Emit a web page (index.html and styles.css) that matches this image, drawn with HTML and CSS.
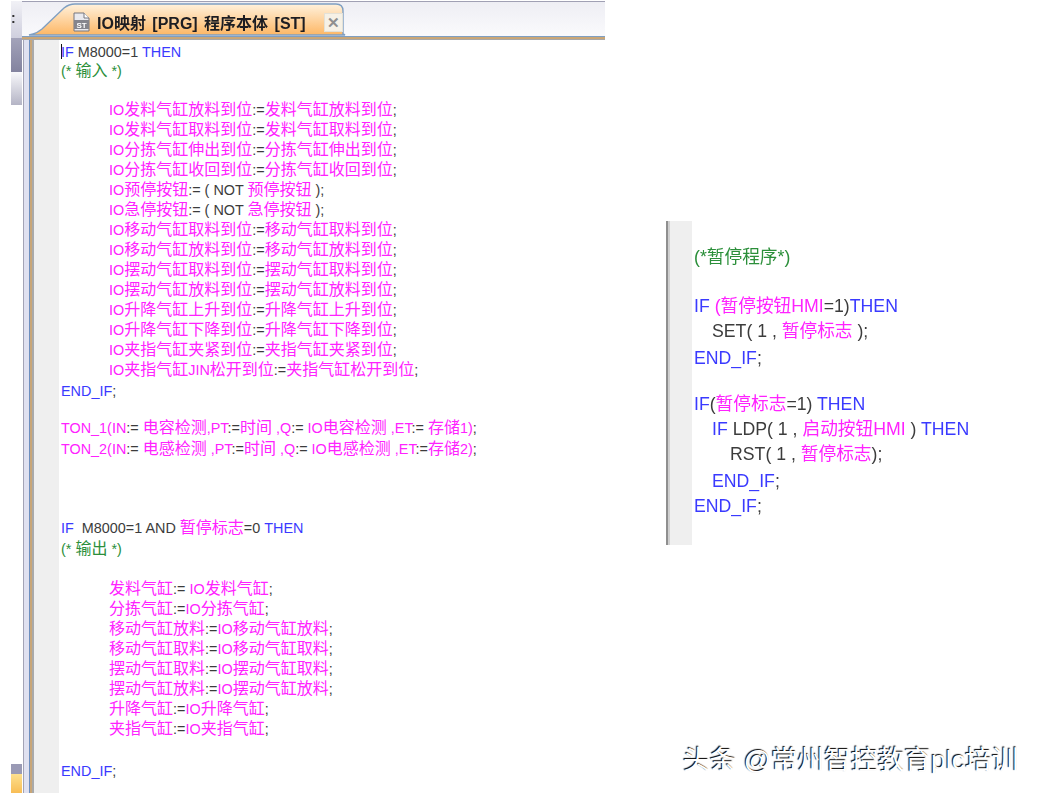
FILE: index.html
```html
<!DOCTYPE html>
<html lang="zh-CN">
<head>
<meta charset="utf-8">
<title>IO映射 [PRG] 程序本体 [ST]</title>
<link rel="stylesheet" href="styles.css">
</head>
<body>
<main class="page">
  <aside class="side">
    <div class="side-top"><span class="grip">:</span></div>
    <div class="side-dark"></div>
    <div class="side-light"></div>
    <div class="side-fill"></div>
    <div class="side-band"></div>
    <div class="side-gold"></div>
  </aside>

  <section class="editor">
    <header class="tabbar">
      <div class="tab">
        <svg class="tab-shape" width="318" height="37" viewBox="0 0 318 37" aria-hidden="true">
          <defs>
            <linearGradient id="tabfill" x1="0" y1="0" x2="0" y2="1">
              <stop offset="0" stop-color="#fff1dc"/>
              <stop offset="1" stop-color="#fdb765"/>
            </linearGradient>
          </defs>
          <path d="M1 36 L5 35 Q9 34 14 30 L36 9 Q41 5 47 5 L308 5 Q315 5 315 12 L315 35 L317 36 Z" fill="url(#tabfill)" stroke="#7f9fc2" stroke-width="1.4"/>
        </svg>
        <svg class="tab-icon" width="17" height="20" viewBox="0 0 17 20" aria-hidden="true">
          <path d="M1 1 H11 L16 6 V19 H1 Z" fill="#e9e9ee" stroke="#77777f"/>
          <path d="M11 1 V6 H16" fill="#fff" stroke="#77777f"/>
          <rect x="1" y="8" width="15" height="9" fill="#85858d"/>
          <text x="8.5" y="16" class="tab-icon-text">ST</text>
        </svg>
        <span class="tab-title">IO映射 [PRG] 程序本体 [ST]</span>
        <span class="tab-close">✕</span>
      </div>
    </header>
    <div class="pane">
      <div class="code">
        <div class="ln"><span class="caret"></span><span class="kw">IF</span> <span class="op">M8000=1</span> <span class="kw">THEN</span></div>
        <div class="ln cm tight1">(* <span class="c">输入</span> *)</div>
        <div class="ln"></div>
        <div class="ln in tight1">IO<span class="c">发料气缸放料到位</span><span class="op">:=</span><span class="c">发料气缸放料到位</span><span class="op">;</span></div>
        <div class="ln in">IO<span class="c">发料气缸取料到位</span><span class="op">:=</span><span class="c">发料气缸取料到位</span><span class="op">;</span></div>
        <div class="ln in">IO<span class="c">分拣气缸伸出到位</span><span class="op">:=</span><span class="c">分拣气缸伸出到位</span><span class="op">;</span></div>
        <div class="ln in">IO<span class="c">分拣气缸收回到位</span><span class="op">:=</span><span class="c">分拣气缸收回到位</span><span class="op">;</span></div>
        <div class="ln in">IO<span class="c">预停按钮</span><span class="op">:= ( NOT</span> <span class="c">预停按钮</span> <span class="op">);</span></div>
        <div class="ln in">IO<span class="c">急停按钮</span><span class="op">:= ( NOT</span> <span class="c">急停按钮</span> <span class="op">);</span></div>
        <div class="ln in">IO<span class="c">移动气缸取料到位</span><span class="op">:=</span><span class="c">移动气缸取料到位</span><span class="op">;</span></div>
        <div class="ln in">IO<span class="c">移动气缸放料到位</span><span class="op">:=</span><span class="c">移动气缸放料到位</span><span class="op">;</span></div>
        <div class="ln in">IO<span class="c">摆动气缸取料到位</span><span class="op">:=</span><span class="c">摆动气缸取料到位</span><span class="op">;</span></div>
        <div class="ln in">IO<span class="c">摆动气缸放料到位</span><span class="op">:=</span><span class="c">摆动气缸放料到位</span><span class="op">;</span></div>
        <div class="ln in">IO<span class="c">升降气缸上升到位</span><span class="op">:=</span><span class="c">升降气缸上升到位</span><span class="op">;</span></div>
        <div class="ln in">IO<span class="c">升降气缸下降到位</span><span class="op">:=</span><span class="c">升降气缸下降到位</span><span class="op">;</span></div>
        <div class="ln in">IO<span class="c">夹指气缸夹紧到位</span><span class="op">:=</span><span class="c">夹指气缸夹紧到位</span><span class="op">;</span></div>
        <div class="ln in">IO<span class="c">夹指气缸</span>JIN<span class="c">松开到位</span><span class="op">:=</span><span class="c">夹指气缸松开到位</span><span class="op">;</span></div>
        <div class="ln kw loose1">END_IF<span class="op">;</span></div>
        <div class="ln"></div>
        <div class="ln tight3">TON_1(IN<span class="op">:=</span> <span class="c">电容检测</span>,PT<span class="op">:=</span><span class="c">时间</span> ,Q<span class="op">:=</span> IO<span class="c">电容检测</span> ,ET<span class="op">:=</span> <span class="c">存储</span>1)<span class="op">;</span></div>
        <div class="ln loose1">TON_2(IN<span class="op">:=</span> <span class="c">电感检测</span> ,PT<span class="op">:=</span><span class="c">时间</span> ,Q<span class="op">:=</span> IO<span class="c">电感检测</span> ,ET<span class="op">:=</span><span class="c">存储</span>2)<span class="op">;</span></div>
        <div class="ln"></div>
        <div class="ln"></div>
        <div class="ln"></div>
        <div class="ln tight1"><span class="kw">IF</span> &nbsp;<span class="op">M8000=1 AND</span> <span class="c">暂停标志</span><span class="op">=0</span> <span class="kw">THEN</span></div>
        <div class="ln cm loose1">(* <span class="c">输出</span> *)</div>
        <div class="ln"></div>
        <div class="ln in"><span class="c">发料气缸</span><span class="op">:=</span> IO<span class="c">发料气缸</span><span class="op">;</span></div>
        <div class="ln in"><span class="c">分拣气缸</span><span class="op">:=</span>IO<span class="c">分拣气缸</span><span class="op">;</span></div>
        <div class="ln in"><span class="c">移动气缸放料</span><span class="op">:=</span>IO<span class="c">移动气缸放料</span><span class="op">;</span></div>
        <div class="ln in"><span class="c">移动气缸取料</span><span class="op">:=</span>IO<span class="c">移动气缸取料</span><span class="op">;</span></div>
        <div class="ln in"><span class="c">摆动气缸取料</span><span class="op">:=</span>IO<span class="c">摆动气缸取料</span><span class="op">;</span></div>
        <div class="ln in"><span class="c">摆动气缸放料</span><span class="op">:=</span>IO<span class="c">摆动气缸放料</span><span class="op">;</span></div>
        <div class="ln in"><span class="c">升降气缸</span><span class="op">:=</span>IO<span class="c">升降气缸</span><span class="op">;</span></div>
        <div class="ln in"><span class="c">夹指气缸</span><span class="op">:=</span>IO<span class="c">夹指气缸</span><span class="op">;</span></div>
        <div class="ln"></div>
        <div class="ln kw loose2">END_IF<span class="op">;</span></div>
      </div>
    </div>
  </section>

  <section class="stop">
    <div class="stop-code">
      <div class="row cm gap-a">(*暂停程序*)</div>
      <div class="row kw">IF <span class="pk">(暂停按钮HMI</span><span class="op">=1)</span>THEN</div>
      <div class="row op ind1">SET( 1 , <span class="pk">暂停标志</span> );</div>
      <div class="row kw gap-b">END_IF<span class="op">;</span></div>
      <div class="row kw gap-c">IF<span class="op">(</span><span class="pk">暂停标志</span><span class="op">=1)</span> THEN</div>
      <div class="row kw ind1">IF <span class="op">LDP( 1 ,</span> <span class="pk">启动按钮HMI</span> <span class="op">)</span> THEN</div>
      <div class="row op ind2">RST( 1 , <span class="pk">暂停标志</span>);</div>
      <div class="row kw ind1 gap-b">END_IF<span class="op">;</span></div>
      <div class="row kw">END_IF<span class="op">;</span></div>
    </div>
  </section>
</main>
<div class="mark">头条 @常州智控教育plc培训</div>
</body>
</html>
```

FILE: styles.css
```css
html, body {
  margin: 0;
  height: 793px;
  overflow: hidden;
  background: #fff;
}

body {
  position: relative;
  font-family: "Liberation Sans", "Noto Sans CJK SC", sans-serif;
}

.page {
  display: flex;
  height: 793px;
  padding-left: 11px;
  box-sizing: border-box;
}

/* left dock strip */
.side {
  width: 11px;
  height: 793px;
  flex: none;
  display: flex;
  flex-direction: column;
  filter: blur(0.4px);
}

.side-top {
  height: 37px;
  margin-top: 1px;
  background: linear-gradient(#f1f1f6, #cfcfde);
  position: relative;
}

.grip {
  font-size: 14px;
  font-weight: bold;
  line-height: 16px;
  color: #333;
  display: block;
  margin-top: 9px;
}

.side-dark {
  height: 34px;
  background: linear-gradient(#a3a3ba, #83839f);
}

.side-light {
  height: 33px;
  background: linear-gradient(#f8f8fb, #b4b4c5);
}

.side-fill {
  flex: 1;
  background: #fff;
}

.side-band {
  height: 10px;
  background: #9a9ab5;
}

.side-gold {
  height: 19px;
  background: linear-gradient(#fde08f, #f8bd55);
}

/* editor window */
.editor {
  width: 583px;
  flex: none;
  display: flex;
  flex-direction: column;
  height: 793px;
  filter: blur(0.4px);
}

.tabbar {
  height: 39px;
  flex: none;
  box-sizing: border-box;
  margin-top: 1px;
  border-top: 1px solid #a0a0b4;
  border-bottom: 1px solid #a8a8a8;
  background: linear-gradient(#eeeef4, #fbfbfd);
  box-shadow: inset 0 -2px 0 #c9a677, inset 0 -3px 0 #7f9fc2;
  padding-left: 6px;
}

.tab {
  position: relative;
  width: 318px;
  height: 37px;
  display: flex;
  align-items: center;
  box-sizing: border-box;
  padding: 3px 0 0 45px;
}

.tab-shape {
  position: absolute;
  left: 0;
  top: -3px;
}

.tab-icon {
  position: relative;
  flex: none;
  margin-right: 7px;
}

.tab-icon-text {
  font-size: 8px;
  font-weight: bold;
  fill: #fff;
  text-anchor: middle;
}

.tab-title {
  position: relative;
  flex: none;
  font-size: 16px;
  font-weight: bold;
  color: #1d1d22;
  white-space: nowrap;
  word-spacing: 2px;
  width: 209px;
}

.tab-close {
  position: relative;
  flex: none;
  width: 17px;
  height: 17px;
  margin-left: 18px;
  border: 1px solid #e4e1d6;
  background: #f6f1e6;
  color: #8f8f8f;
  font-size: 15px;
  font-weight: bold;
  line-height: 17px;
  text-align: center;
}

.pane {
  flex: 1;
  background: linear-gradient(90deg,
    #fff 0 1px, #a3a3b5 1px 2px, #e0e1f0 2px 7px, #6d8fbf 7px 8px,
    #c9a677 8px 10px, #a9a9a9 10px 12px, #efefef 12px 37px, #fff 37px);
  padding: 2px 0 0 39px;
  overflow: hidden;
}

/* ST code */
.code {
  font-size: 14.4px;
  line-height: 20px;
  color: #ff22ff;
  white-space: nowrap;
}

.ln {
  height: 20px;
}

.tight1 {
  margin-top: -1px;
}

.tight3 {
  margin-top: -3px;
}

.loose1 {
  margin-top: 1px;
}

.loose2 {
  margin-top: 2px;
}

.in {
  padding-left: 48px;
}

.c {
  font-size: 16px;
  line-height: 0;
}

.kw {
  color: #3a3aff;
}

.op {
  color: #3c3c3c;
}

.cm {
  color: #2b8f3a;
}

.pk {
  color: #ff22ff;
}

.caret {
  display: inline-block;
  width: 1px;
  height: 15px;
  background: #111;
  vertical-align: -2px;
  margin-right: -1px;
}

/* pause-program snippet */
.stop {
  margin: 221px 0 0 61px;
  width: 350px;
  height: 324px;
  flex: none;
  background: linear-gradient(90deg,
    #8f8f8f 0 2px, #cfcfcf 2px 4px, #efefef 4px 26px, #fff 26px);
  padding: 24px 0 0 28px;
  box-sizing: border-box;
  filter: blur(0.3px);
}

.stop-code {
  font-size: 17.7px;
  line-height: 25px;
  white-space: nowrap;
}

.row {
  height: 25px;
}

.gap-a {
  margin-bottom: 24px;
}

.gap-b {
  margin-top: 2px;
}

.gap-c {
  margin-top: 21px;
}

.ind1 {
  padding-left: 18px;
}

.ind2 {
  padding-left: 36px;
}

/* platform watermark */
.mark {
  position: absolute;
  left: 683px;
  top: 745px;
  font-size: 26.7px;
  line-height: 30px;
  white-space: nowrap;
  color: #fff;
  text-shadow: -1px -1px 1px #000;
}
```
